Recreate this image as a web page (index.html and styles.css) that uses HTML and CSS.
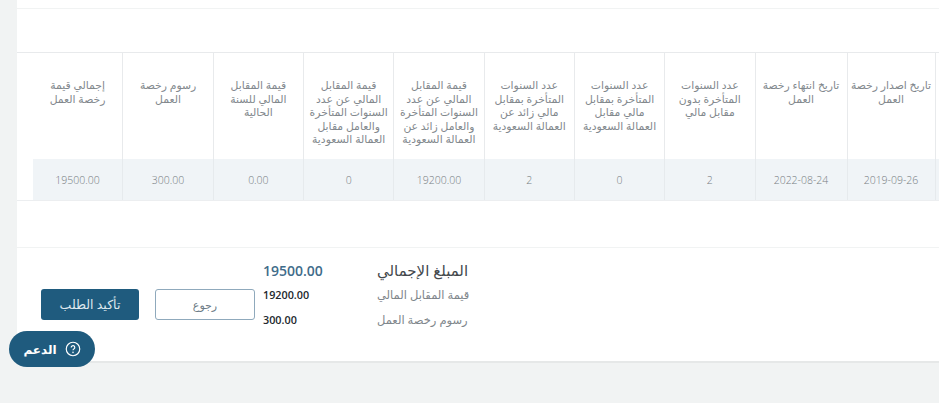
FILE: index.html
```html
<!DOCTYPE html>
<html lang="ar" dir="rtl">
<head>
  <meta charset="UTF-8" />
  <title>تأكيد الطلب</title>
  <link rel="stylesheet" href="styles.css">
</head>
<body>
  <main class="card">
    <div class="top-strip"></div>

    <!-- جدول رخصة العمل -->
    <div class="table-wrap">
      <table class="fees">
        <thead>
          <tr>
            <th class="edge"></th>
            <th class="wide-b">تاريخ اصدار رخصة<br>العمل</th>
            <th class="wide-a">تاريخ انتهاء رخصة<br>العمل</th>
            <th>عدد السنوات<br>المتأخرة بدون<br>مقابل مالي</th>
            <th>عدد السنوات<br>المتأخرة بمقابل<br>مالي مقابل<br>العمالة السعودية</th>
            <th>عدد السنوات<br>المتأخرة بمقابل<br>مالي زائد عن<br>العمالة السعودية</th>
            <th>قيمة المقابل<br>المالي عن عدد<br>السنوات المتأخرة<br>والعامل زائد عن<br>العمالة السعودية</th>
            <th>قيمة المقابل<br>المالي عن عدد<br>السنوات المتأخرة<br>والعامل مقابل<br>العمالة السعودية</th>
            <th>قيمة المقابل<br>المالي للسنة<br>الحالية</th>
            <th>رسوم رخصة<br>العمل</th>
            <th>إجمالي قيمة<br>رخصة العمل</th>
          </tr>
        </thead>
        <tbody>
          <tr>
            <td></td>
            <td>2019-09-26</td>
            <td>2022-08-24</td>
            <td>2</td>
            <td>0</td>
            <td>2</td>
            <td>19200.00</td>
            <td>0</td>
            <td>0.00</td>
            <td>300.00</td>
            <td>19500.00</td>
          </tr>
        </tbody>
      </table>
    </div>

    <div class="gap"></div>

    <!-- الملخص -->
    <section class="summary-row">
      <dl class="summary">
        <dt class="total-label">المبلغ الإجمالي</dt>
        <dd class="total-value">19500.00</dd>
        <dt>قيمة المقابل المالي</dt>
        <dd>19200.00</dd>
        <dt>رسوم رخصة العمل</dt>
        <dd>300.00</dd>
      </dl>
      <div class="actions">
        <button class="btn btn-back">رجوع</button>
        <button class="btn btn-confirm">تأكيد الطلب</button>
      </div>
    </section>
  </main>

  <a class="support" href="#">
    <svg class="support-icon" viewBox="0 0 18 18" aria-hidden="true">
      <circle cx="9" cy="9" r="7.6" />
      <path d="M7 7.2a2 2 0 1 1 3.2 1.6c-.8.5-1.2 1-1.2 1.7" />
      <circle class="dot" cx="9" cy="12.8" r=".85" />
    </svg>
    <span>الدعم</span>
  </a>
</body>
</html>
```

FILE: styles.css
```css
* {
  box-sizing: border-box;
}

html, body {
  height: 403px;
  overflow: hidden;
}

body {
  margin: 0;
  position: relative;
  background: #f1f3f3;
  font-family: "Open Sans", "DejaVu Sans", sans-serif;
  color: #7d8388;
}

.card {
  margin-left: 17px;
  height: 363px;
  background: #fff;
  border-bottom: 2px solid #e6e8e8;
}

.top-strip {
  height: 9px;
  border-bottom: 1px solid #f1f3f3;
}

.table-wrap {
  margin-top: 43px;
  padding-left: 16px;
  overflow: hidden;
  border-top: 1px solid #e8eaec;
  border-bottom: 1px solid #eceef0;
}

/* الجدول */
.fees {
  width: 906px;
  table-layout: fixed;
  border-collapse: collapse;
}

.fees th {
  width: 90.3px;
  height: 106px;
  padding: 25px 2px 0;
  vertical-align: top;
  font-size: 10.8px;
  font-weight: 400;
  line-height: 13.5px;
  text-align: center;
  color: #82888d;
  border-left: 1px solid #e8eaec;
}

.fees th.edge {
  width: 4px;
  padding: 0;
}

.fees th.wide-a {
  width: 92px;
}

.fees th.wide-b {
  width: 88px;
}

.fees td {
  height: 41px;
  padding: 0;
  font-size: 10.5px;
  font-weight: 300;
  text-align: center;
  color: #777d82;
  background: #f0f4f7;
  border-left: 1px solid #e6eaed;
}

.fees th:last-child,
.fees td:last-child {
  border-left: 0;
}

.gap {
  height: 47px;
  border-bottom: 1px solid #f1f3f3;
}

/* الملخص والأزرار */
.summary-row {
  display: flex;
  justify-content: flex-end;
  gap: 8px;
  padding: 10px 24px 0 24px;
}

.summary {
  display: grid;
  grid-template-columns: 93px 114px;
  grid-auto-rows: 25px;
  grid-template-rows: 24px;
  width: 207px;
  margin: 0;
  align-items: center;
}

.summary dt {
  line-height: 25px;
  font-size: 11.5px;
  text-align: left;
  white-space: nowrap;
  color: #80868b;
}

.summary dd {
  line-height: 25px;
  margin: 0;
  font-size: 10.8px;
  font-weight: 600;
  color: #22282d;
  text-align: left;
}

.summary .total-label {
  font-size: 15px;
  font-weight: 400;
  color: #44494d;
}

.summary .total-value {
  font-size: 14px;
  color: #3f6c8a;
}

.actions {
  display: flex;
  gap: 16px;
  padding-top: 31px;
}

.btn {
  height: 31px;
  border-radius: 3px;
  font-family: inherit;
  cursor: pointer;
}

.btn-back {
  width: 100px;
  font-size: 11px;
  background: #fff;
  color: #6b7a85;
  border: 1px solid #8fa9bc;
}

.btn-confirm {
  width: 98px;
  font-size: 12.5px;
  background: #1f5b7e;
  color: #dfe8ee;
  border: 0;
}

/* زر الدعم */
.support {
  position: absolute;
  left: 9px;
  top: 331px;
  width: 86px;
  height: 36px;
  display: flex;
  align-items: center;
  justify-content: center;
  gap: 8px;
  border-radius: 18px;
  background: #1f5b7e;
  color: #fff;
  font-size: 12px;
  font-weight: 700;
  text-decoration: none;
}

.support-icon {
  width: 16px;
  height: 16px;
  fill: none;
  stroke: #fff;
  stroke-width: 1.3;
}

.support-icon .dot {
  fill: #fff;
  stroke: none;
}
```
